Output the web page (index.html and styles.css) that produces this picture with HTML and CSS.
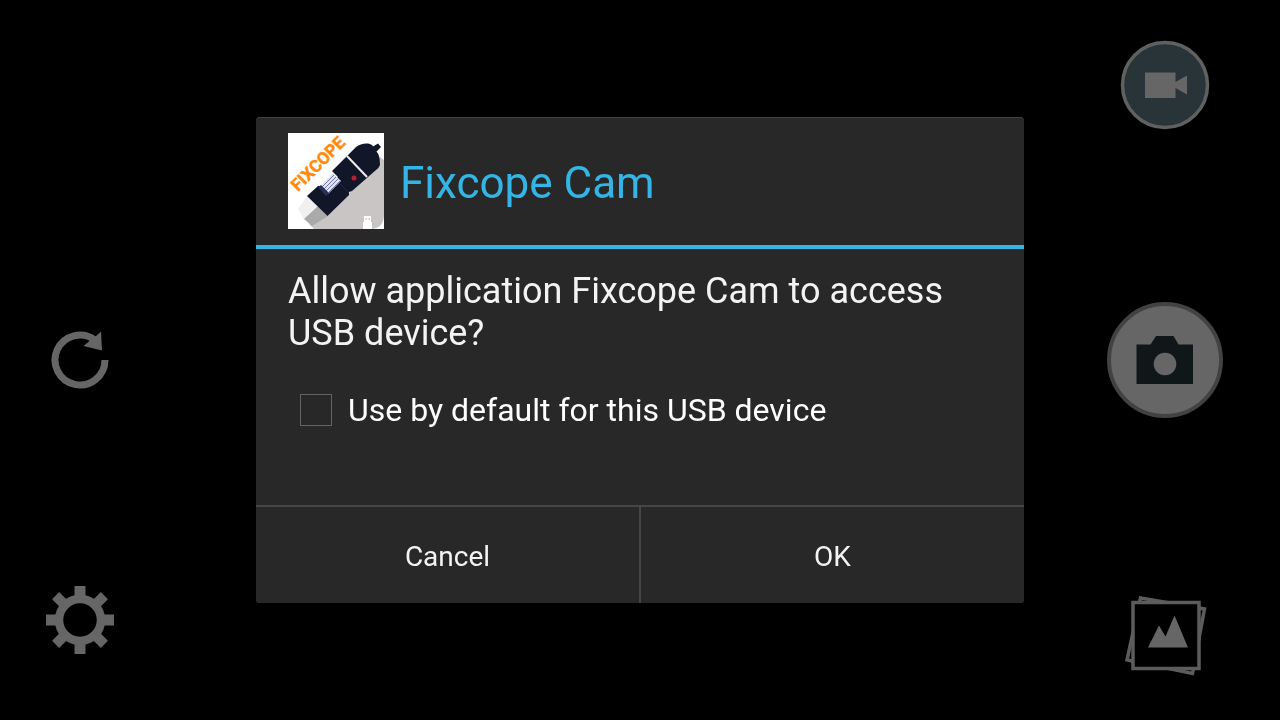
FILE: index.html
```
<!DOCTYPE html>
<html lang="en">
<head>
    <meta charset="UTF-8">
    <meta name="viewport" content="width=device-width, initial-scale=1.0">
    <title>Fixcope Cam</title>
    <link rel="stylesheet" href="styles.css">
</head>
<body>
    <main class="camera">
        <div class="controls controls-left">
            <button class="control control-middle" aria-label="Refresh">
                <svg width="60" height="60" viewBox="0 0 60 60">
                    <path d="M55 30A25 25 0 1 1 45 10" fill="none" stroke="#666" stroke-width="7"/>
                    <path d="M51 1.500L52 20.500L33.500 16L40 10.500L45 7Z" fill="#666"/>
                </svg>
            </button>
            <button class="control control-bottom" aria-label="Settings">
                <svg width="68" height="68" viewBox="-34 -34 68 68">
                    <g fill="#666">
                        <path d="M-5.500 -34h11v12h-11zM-5.500 22h11v12h-11zM-34 -5.500h12v11h-12zM22 -5.500h12v11h-12z"/>
                        <path transform="rotate(45)" d="M-5 -34.500h10v12h-10zM-5 22.500h10v12h-10zM-34.500 -5h12v10h-12zM22.500 -5h12v10h-12z"/>
                    </g>
                    <circle r="21" fill="none" stroke="#666" stroke-width="8.500"/>
                </svg>
            </button>
        </div>
        <div class="controls controls-right">
            <button class="control control-top" aria-label="Record video">
                <svg width="90" height="90" viewBox="0 0 90 90">
                    <circle cx="45" cy="45" r="42.500" fill="#293439" stroke="#5f6060" stroke-width="3.500"/>
                    <path d="M25 32.500H55.500V42L67 35.500V54.500L55.500 48V58H25Z" fill="#666"/>
                </svg>
            </button>
            <button class="control control-middle" aria-label="Take photo">
                <svg width="118" height="118" viewBox="0 0 118 118">
                    <circle cx="59" cy="59" r="56" fill="#666" stroke="#424242" stroke-width="4"/>
                    <path d="M30.500 43.500H44.500L50 35H67.500L72.500 43.500H87V83H30.500Z" fill="#101719"/>
                    <circle cx="59" cy="63" r="11.300" fill="#666"/>
                </svg>
            </button>
            <button class="control control-bottom" aria-label="Gallery">
                <svg width="84" height="88" viewBox="0 0 84 88">
                    <g fill="#000" stroke="#5c5c5c" stroke-width="3.500">
                        <path d="M17.500 6L81.500 17L69.500 81.500L4 68Z"/>
                        <rect x="10" y="10.500" width="66" height="66"/>
                    </g>
                    <path d="M25 55.500L36 33.500L42.500 44.500L51.500 23.500L65 55.500Z" fill="#666"/>
                </svg>
            </button>
        </div>
    </main>

    <div class="overlay">
        <form class="dialog" role="dialog" aria-labelledby="dialog-title" onsubmit="return false">
            <header class="dialog-header">
                <svg class="app-icon" width="96" height="96" viewBox="0 0 96 96">
                    <rect width="96" height="96" fill="#fff"/>
                    <path d="M92 24L96 27V83Q95 95 84 96H26L21 91L39 82L61 60Z" fill="#c9c5c5"/>
                    <path d="M19 63L10 76L16 86L30 73Z" fill="#f0f0f0"/>
                    <path d="M30 73L16 86L24 93L40 83Z" fill="#aaa"/>
                    <path d="M59 23L68 14Q73 10 80 10.500Q84 11 86 14.500L85 13.500L90 10.500L93 14L88.500 18.500Q92 22 92 32Q91 35 88 37L64 58L61 59V62L39.500 83L19 63L30 53L39 54L50 44L44 38Z" fill="#111729"/>
                    <path d="M59 23L79 44" stroke="#eee" stroke-width="2"/>
                    <path d="M52 51L61 60" stroke="#252a3b" stroke-width="1"/>
                    <path d="M33 52L45 40L53 48L40 61Z" fill="#e2e3f0"/>
                    <path d="M34 54L46 42M36 56L48 44M38 58L50 46M40 60L52 48" stroke="#7079a8" stroke-width="1"/>
                    <path d="M30 54L33 52L41 60L38 63Z" fill="#283257"/>
                    <circle cx="66" cy="45" r="2.500" fill="#c01c30"/>
                    <path d="M76 83h7v6h1v7h-9v-7h1z" fill="#fff"/>
                    <path d="M77.500 85h1.500v2h-1.500zM80.500 85h1.500v2h-1.500z" fill="#d5d2d2"/>
                    <text class="app-icon-text" transform="translate(10 59) rotate(-45)">FIXCOPE</text>
                </svg>
                <h1 class="dialog-title" id="dialog-title">Fixcope Cam</h1>
            </header>
            <div class="dialog-body">
                <p class="message">Allow application Fixcope Cam to access USB device?</p>
                <div class="option">
                    <input type="checkbox" id="use-default">
                    <label for="use-default">Use by default for this USB device</label>
                </div>
            </div>
            <footer class="dialog-actions">
                <button type="button">Cancel</button>
                <button type="submit">OK</button>
            </footer>
        </form>
    </div>
</body>
</html>
```
FILE: styles.css
```
* {
    box-sizing: border-box;
}
body {
    margin: 0;
    background: #000;
    color: #fff;
    font-family: Roboto, sans-serif;
}
.camera {
    display: flex;
    justify-content: space-between;
    min-height: 100vh;
}
.controls {
    display: grid;
    grid-template-rows: 1fr auto 1fr;
    justify-items: center;
}
.controls-left {
    width: 160px;
    padding: 66px 0;
}
.controls-right {
    width: 230px;
    padding: 40px 0;
}
.control {
    padding: 0;
    border: none;
    background: none;
    cursor: pointer;
}
.control svg {
    display: block;
}
.control-top {
    grid-row: 1;
    align-self: start;
}
.control-middle {
    grid-row: 2;
}
.control-bottom {
    grid-row: 3;
    align-self: end;
}

/* dialog */
.overlay {
    position: fixed;
    inset: 0;
    display: flex;
    align-items: center;
    justify-content: center;
    pointer-events: none;
}
.dialog {
    width: 60%;
    background: #282828;
    border-radius: 4px;
    box-shadow: inset 0 1px 0 #414141;
    overflow: hidden;
    pointer-events: auto;
}
.dialog-header {
    display: flex;
    align-items: center;
    gap: 16px;
    padding: 16px 32px;
    border-bottom: 4px solid #33b5e5;
}
.app-icon-text {
    font-size: 17px;
    font-weight: 700;
    fill: #ff8a0c;
    stroke: #ff8a0c;
    stroke-width: 0.4;
}
.dialog-title {
    margin: 0;
    padding-top: 4px;
    color: #33b5e5;
    font-size: 44px;
    font-weight: 400;
}
.dialog-body {
    padding: 21px 32px 75px;
}
.message {
    margin: 0;
    color: #f3f3f3;
    font-size: 36px;
    line-height: 42px;
}
.option {
    display: flex;
    align-items: center;
    gap: 16px;
    padding: 35px 12px 0;
    font-size: 32px;
    line-height: 40px;
}
.option input {
    appearance: none;
    width: 32px;
    height: 32px;
    margin: 0;
    border: 1px solid #646464;
}
.option input:checked {
    background: #33b5e5;
}
.option label {
    padding-top: 1px;
}
.dialog-actions {
    display: grid;
    grid-template-columns: 1fr 1fr;
    gap: 2px;
    border-top: 2px solid #464646;
    background: #464646;
}
.dialog-actions button {
    height: 96px;
    padding: 2px 0 0;
    border: none;
    background: #282828;
    color: #f3f3f3;
    font-family: inherit;
    font-size: 28px;
    cursor: pointer;
}
```
